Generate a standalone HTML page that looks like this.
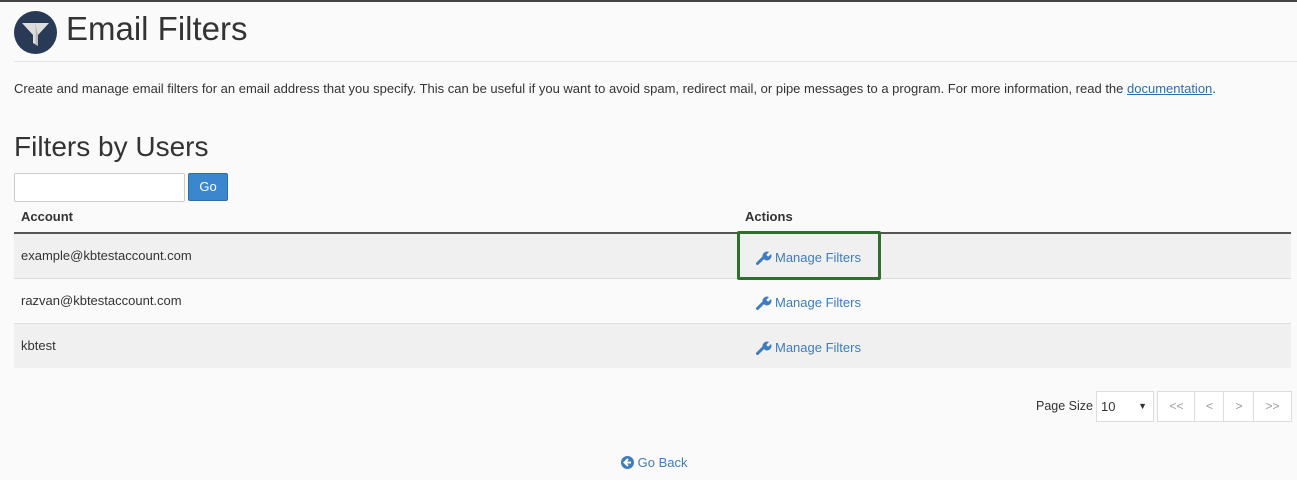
<!DOCTYPE html><html><head><style>
body{margin:0;background:#fafafa;font-family:"Liberation Sans",sans-serif;color:#333;width:1297px;height:480px;overflow:hidden;position:relative}
.a{position:absolute}
a{color:#2a6eb5}
.row{position:absolute;left:14px;width:1277px;height:44px;border-bottom:1px solid #ddd;font-size:13px}
.row span{position:absolute;left:7px;top:14px}
.mf{position:absolute;left:742px;top:15px;color:#3d7cc0;font-size:13px}
.mf svg{vertical-align:-3px;margin-right:3px}
.pg{position:absolute;top:391px;height:29px;border:1px solid #ddd;background:#fff;font-size:12px;color:#999;text-align:center;line-height:29px}
</style></head><body>
<div class="a" style="left:0;top:0;width:1297px;height:2px;background:#444"></div>
<svg class="a" style="left:14px;top:11px" width="43" height="43" viewBox="0 0 43 43"><circle cx="21.5" cy="21.5" r="21.5" fill="#293a56"/><path d="M8 12 H35 L24 24 V35 L19 32 V24 Z" fill="#ddd"/><path d="M21.5 12 L24 24 V35 L21.5 33Z" fill="#bbb"/></svg>
<div class="a" style="left:66px;top:10px;font-size:33px;color:#333">Email Filters</div>
<div class="a" style="left:14px;top:61px;width:1283px;border-top:1px solid #e4e4e4"></div>
<div class="a" style="left:14px;top:81px;font-size:13px">Create and manage email filters for an email address that you specify. This can be useful if you want to avoid spam, redirect mail, or pipe messages to a program. For more information, read the <a href="#">documentation</a>.</div>
<div class="a" style="left:14px;top:131px;font-size:28px">Filters by Users</div>
<div class="a" style="left:14px;top:173px;width:169px;height:27px;border:1px solid #ccc;background:#fff;border-radius:2px"></div>
<div class="a" style="left:188px;top:173px;width:40px;height:28px;background:#3a87cf;border:1px solid #2e6ea8;box-sizing:border-box;border-radius:2px;color:#fff;font-size:13px;text-align:center;line-height:26px">Go</div>
<div class="a" style="left:21px;top:209px;font-size:13px;font-weight:bold">Account</div>
<div class="a" style="left:745px;top:209px;font-size:13px;font-weight:bold">Actions</div>
<div class="a" style="left:14px;top:232px;width:1277px;border-top:2px solid #555"></div>
<div class="row" style="top:234px;background:#f0f0f0"><span>example@kbtestaccount.com</span><div class="mf"><svg width="16" height="16" viewBox="0 0 16 16"><path d="M1.5 14.5 L8 8" stroke="#3d7cc0" stroke-width="3" stroke-linecap="round"/><path d="M7 9 A4.5 4.5 0 0 1 13 3 L10.5 5.5 L11 7 L12.5 7.5 L15 5 A4.5 4.5 0 0 1 9 11Z" fill="#3d7cc0"/></svg>Manage Filters</div></div>
<div class="row" style="top:279px;background:#fafafa"><span>razvan@kbtestaccount.com</span><div class="mf"><svg width="16" height="16" viewBox="0 0 16 16"><path d="M1.5 14.5 L8 8" stroke="#3d7cc0" stroke-width="3" stroke-linecap="round"/><path d="M7 9 A4.5 4.5 0 0 1 13 3 L10.5 5.5 L11 7 L12.5 7.5 L15 5 A4.5 4.5 0 0 1 9 11Z" fill="#3d7cc0"/></svg>Manage Filters</div></div>
<div class="row" style="top:324px;background:#f0f0f0;border-bottom:none"><span>kbtest</span><div class="mf"><svg width="16" height="16" viewBox="0 0 16 16"><path d="M1.5 14.5 L8 8" stroke="#3d7cc0" stroke-width="3" stroke-linecap="round"/><path d="M7 9 A4.5 4.5 0 0 1 13 3 L10.5 5.5 L11 7 L12.5 7.5 L15 5 A4.5 4.5 0 0 1 9 11Z" fill="#3d7cc0"/></svg>Manage Filters</div></div>
<div class="a" style="left:737px;top:231px;width:138px;height:43px;border:3px solid #2f6f2c;border-radius:2px"></div>
<div class="a" style="left:1036px;top:399px;font-size:12.5px">Page Size</div>
<div class="pg" style="left:1096px;width:52px;text-align:left;color:#333;padding-left:4px;font-size:13px">10<span style="position:absolute;right:6px;font-size:9px">▼</span></div>
<div class="pg" style="left:1157px;width:37px">&lt;&lt;</div>
<div class="pg" style="left:1194px;width:29px">&lt;</div>
<div class="pg" style="left:1223px;width:30px">&gt;</div>
<div class="pg" style="left:1253px;width:37px">&gt;&gt;</div>
<div class="a" style="left:621px;top:455px;font-size:13px;color:#3d7cc0"><svg width="13" height="13" viewBox="0 0 13 13" style="vertical-align:-2px"><circle cx="6.5" cy="6.5" r="6.5" fill="#3d7cc0"/><path d="M7 3 L3.5 6.5 L7 10 M4 6.5 H10" stroke="#fff" stroke-width="2" fill="none"/></svg> Go Back</div>
</body></html>
